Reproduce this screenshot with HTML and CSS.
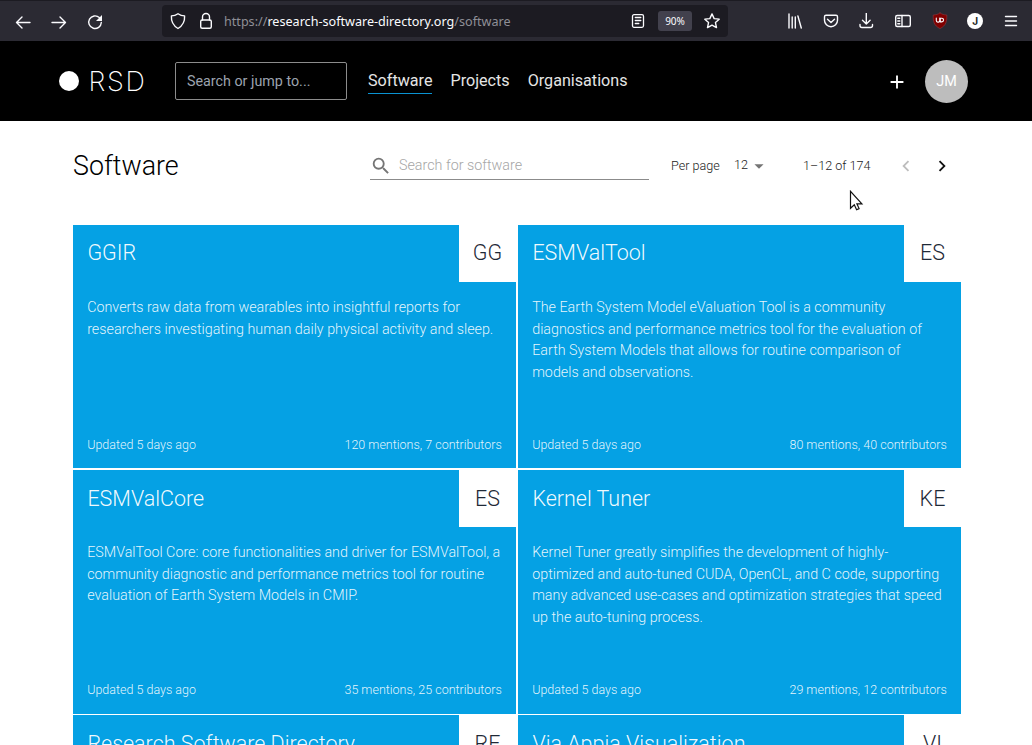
FILE: index.html
```html
<!DOCTYPE html>
<html lang="en">
<head>
<meta charset="utf-8">
<title>Software | Research Software Directory</title>
<link rel="stylesheet" href="styles.css">
</head>
<body>
<div class="toolbar">
  <div class="nav-buttons">
    <svg width="16" height="16" viewBox="0 0 16 16"><path d="M15 8.500H1.500M7 3 1.500 8.500 7 14"/></svg>
    <svg width="16" height="16" viewBox="0 0 16 16"><path d="M1 8.500h13.500M9 3l5.500 5.500L9 14"/></svg>
    <svg width="16" height="16" viewBox="0 0 16 16"><path d="M12.300 3.600A6.300 6.300 0 1 0 14.300 8.500"/><path class="solid" d="M15 1v6H9z"/></svg>
  </div>
  <div class="address">
    <svg width="16" height="18" viewBox="0 0 16 18"><path d="M8 1.700c2 1.400 4.300 2.100 6.600 2.200.3 4.800-1 9.300-6.600 12.600C2.400 13.200 1.100 8.700 1.400 3.900 3.700 3.800 6 3.100 8 1.700z"/></svg>
    <svg class="lock" width="14" height="18" viewBox="0 0 14 18"><rect x="1.700" y="8" width="10.600" height="8.300" rx="1.500"/><path d="M3.500 8V5a3.500 3.500 0 0 1 7 0v3"/></svg>
    <div class="url">https://<span>research-software-directory.org</span>/software</div>
    <svg class="reader" width="14" height="16" viewBox="0 0 14 16"><rect x="1.500" y="1.700" width="11" height="12.600" rx="1.500"/><path d="M4.300 4.500h5.500M4.300 7.500h5.500M4.300 10.500h3.500"/></svg>
    <div class="zoom">90%</div>
    <svg width="18" height="18" viewBox="0 0 18 18"><path d="m9 1.900 2.150 4.700 5.050.55-3.750 3.450 1.050 5L9 13.100 4.500 15.600l1.050-5L1.800 7.150l5.050-.55z"/></svg>
  </div>
  <div class="extensions">
    <svg width="16" height="16" viewBox="0 0 16 16"><path d="M2 1v14M5.200 4v11M8.300 4v11M10.900 3l3.400 12"/></svg>
    <svg width="16" height="16" viewBox="0 0 16 16"><path d="M3 2.200h10q1.500 0 1.500 1.500v3.500a6.500 6.500 0 0 1-13 0V3.700q0-1.500 1.500-1.500zM4.500 6.200 8 9.500l3.500-3.300"/></svg>
    <svg width="16" height="16" viewBox="0 0 16 16"><path d="M8.300 0v11M4.500 7.200l3.800 3.800 3.800-3.800M2 11.500v1q0 2 2 2h8.500q2 0 2-2v-1"/></svg>
    <svg width="18" height="16" viewBox="0 0 18 16"><rect x="1.700" y="2.500" width="14.600" height="11" rx="1.500"/><path d="M8 2.500v11M3.800 5.200h2M3.800 8h2M3.800 10.700h2"/></svg>
    <svg class="ublock" width="16" height="18" viewBox="0 0 16 18"><path class="ub-shield" d="M8 1c2 1.300 4 1.900 6.800 2 .2 6-.5 10.500-6.800 13.600C1.700 13.500 1 9 1.200 3 4 2.900 6 2.300 8 1z"/><path class="ub-mark" d="M4.300 6v2.500q0 1.600 1.400 1.600h.8q1.200 0 1.200-1.600V6M8.300 6.200v3.700h1.400a1.850 1.850 0 0 0 0-3.700z"/></svg>
    <div class="account">J</div>
    <svg width="16" height="16" viewBox="0 0 16 16"><path d="M2.500 3.500h11M2.500 8h11M2.500 12.500h11"/></svg>
  </div>
</div>
<header class="site-header">
  <div class="logo"><i></i><span>RSD</span></div>
  <div class="jump">Search or jump to...</div>
  <nav class="menu"><a class="active">Software</a><a>Projects</a><a>Organisations</a></nav>
  <svg class="plus" width="22" height="22" viewBox="0 0 24 24"><path d="M19 13h-6v6h-2v-6H5v-2h6V5h2v6h6z"/></svg>
  <div class="avatar">JM</div>
</header>
<main class="content">
  <div class="page-head">
    <h1>Software</h1>
    <div class="search"><svg width="22" height="22" viewBox="0 0 24 24"><path d="M15.500 14h-.79l-.28-.27A6.470 6.470 0 0 0 16 9.500 6.500 6.500 0 1 0 9.500 16c1.610 0 3.090-.59 4.230-1.570l.27.28v.79l5 4.990L20.490 19l-4.990-5zm-6 0C7.010 14 5 11.990 5 9.500S7.010 5 9.500 5 14 7.010 14 9.500 11.990 14 9.500 14z"/></svg><span>Search for software</span></div>
    <div class="pager">
      <span class="per-page">Per page</span>
      <span class="count">12</span>
      <svg class="caret" width="22" height="22" viewBox="0 0 24 24"><path d="m7 10 5 5 5-5z"/></svg>
      <span class="range">1–12 of 174</span>
      <svg class="prev" width="22" height="22" viewBox="0 0 24 24"><path d="M15.410 16.590 10.830 12l4.580-4.590L14 6l-6 6 6 6z"/></svg>
      <svg class="next" width="22" height="22" viewBox="0 0 24 24"><path d="M8.590 16.590 13.170 12 8.590 7.410 10 6l6 6-6 6z"/></svg>
    </div>
  </div>
  <section class="cards">
    <article class="card">
      <div class="card-top"><h2>GGIR</h2><b>GG</b></div>
      <p>Converts raw data from wearables into insightful reports for<br>researchers investigating human daily physical activity and sleep.</p>
      <footer><span>Updated 5 days ago</span><span>120 mentions, 7 contributors</span></footer>
    </article>
    <article class="card">
      <div class="card-top"><h2>ESMValTool</h2><b>ES</b></div>
      <p>The Earth System Model eValuation Tool is a community<br>diagnostics and performance metrics tool for the evaluation of<br>Earth System Models that allows for routine comparison of<br>models and observations.</p>
      <footer><span>Updated 5 days ago</span><span>80 mentions, 40 contributors</span></footer>
    </article>
    <article class="card">
      <div class="card-top"><h2>ESMValCore</h2><b>ES</b></div>
      <p>ESMValTool Core: core functionalities and driver for ESMValTool, a<br>community diagnostic and performance metrics tool for routine<br>evaluation of Earth System Models in CMIP.</p>
      <footer><span>Updated 5 days ago</span><span>35 mentions, 25 contributors</span></footer>
    </article>
    <article class="card">
      <div class="card-top"><h2>Kernel Tuner</h2><b>KE</b></div>
      <p>Kernel Tuner greatly simplifies the development of highly-<br>optimized and auto-tuned CUDA, OpenCL, and C code, supporting<br>many advanced use-cases and optimization strategies that speed<br>up the auto-tuning process.</p>
      <footer><span>Updated 5 days ago</span><span>29 mentions, 12 contributors</span></footer>
    </article>
    <article class="card">
      <div class="card-top"><h2>Research Software Directory</h2><b>RE</b></div>
    </article>
    <article class="card">
      <div class="card-top"><h2>Via Appia Visualization</h2><b>VI</b></div>
    </article>
  </section>
</main>
<svg class="cursor" width="16" height="22" viewBox="0 0 16 22"><path d="M1.500 1.300v17l3.800-3.500 2.300 5 2.500-1.200-2.200-4.800h5z"/></svg>
</body>
</html>
```
FILE: styles.css
```css
* { box-sizing: border-box; }
body {
  margin: 0;
  width: 1032px;
  height: 745px;
  overflow: hidden;
  position: relative;
  background: #fff;
  font-family: Roboto, "Liberation Sans", sans-serif;
}
svg { display: block; flex: none; }

/* Browser toolbar */
.toolbar {
  display: flex;
  align-items: center;
  height: 41px;
  padding: 0 13px 0 15px;
  background: #2b2a33;
  border-top: 1px solid #1c1b22;
}
.toolbar svg { fill: none; stroke: #fbfbfe; stroke-width: 1.4; stroke-linejoin: round; stroke-linecap: round; }
.toolbar .solid { fill: #fbfbfe; stroke: none; }
.nav-buttons { display: flex; gap: 20px; width: 147px; padding-top: 1px; }
.address {
  display: flex;
  align-items: center;
  width: 566px;
  height: 32px;
  padding: 0 7px 0 8px;
  border-radius: 4px;
  background: #1c1b22;
}
.lock { margin-left: 13px; }
.url { flex: 1; margin-left: 11px; padding-top: 2px; color: #8f8f96; font: 12.6px/20px "Noto Sans", sans-serif; }
.url span { color: #fbfbfe; }
.toolbar .reader { stroke-width: 1.3; }
.zoom {
  width: 34px;
  height: 20px;
  margin: 0 11px 0 13px;
  border-radius: 3px;
  background: #42414d;
  color: #fbfbfe;
  font: 10px/20px "Noto Sans", sans-serif;
  text-align: center;
}
.extensions { display: flex; align-items: center; justify-content: space-between; flex: 1; margin-left: 59px; }
.toolbar .ub-shield { fill: #800000; stroke: #8d3940; stroke-width: .6; }
.toolbar .ub-mark { stroke-width: 1.1; }
.account {
  width: 16px;
  height: 16px;
  border-radius: 50%;
  background: #fff;
  color: #222;
  font: bold 10px/16px Inter, sans-serif;
  text-align: center;
}

/* Site header */
.site-header { display: flex; align-items: center; height: 80px; padding: 0 64px 0 58.500px; background: #000; color: #fff; }
.logo { display: flex; align-items: center; gap: 10px; width: 116.500px; }
.logo i { width: 20px; height: 20px; border-radius: 50%; background: #fff; }
.logo span { padding-top: 2px; font: 200 27px/30px Inter, sans-serif; letter-spacing: 1.7px; }
.jump {
  width: 172px;
  height: 38px;
  padding-left: 11px;
  border: 1px solid #8c8c8c;
  border-radius: 2px;
  color: #9ca3af;
  font-size: 14.3px;
  line-height: 37px;
}
.menu { display: flex; gap: 18px; flex: 1; margin-left: 21px; font-size: 16.150px; line-height: 26px; color: #e5e5e5; }
.menu a { height: 26px; }
.menu .active { border-bottom: 1px solid #0a93d2; }
.plus { fill: #fff; margin: 1px 17.500px 0 0; }
.avatar {
  width: 43px;
  height: 43px;
  border-radius: 50%;
  background: #bdbdbd;
  font-size: 14.4px;
  line-height: 43px;
  text-align: center;
}

/* Page heading */
.content { width: 888px; margin-left: 73px; }
.page-head { display: flex; align-items: center; height: 104px; padding-bottom: 15px; }
h1, h2, p { margin: 0; font-weight: 300; }
h1 { width: 297px; font-size: 26.800px; line-height: 36px; }
.search {
  display: flex;
  align-items: center;
  gap: 7px;
  width: 279px;
  height: 30px;
  margin-bottom: 1px;
  border-bottom: 1px solid #8b8b8b;
  color: #a6a6a6;
  font-size: 14.300px;
  font-weight: 300;
}
.search svg { fill: #757575; margin-top: 2px; }
.pager { display: flex; align-items: center; flex: 1; margin-left: 22px; color: #222; font-size: 12.600px; font-weight: 300; }
.per-page { width: 63px; }
.count { width: 14px; padding-bottom: 2px; }
.caret { fill: #757575; margin-right: 33px; }
.range { width: 92px; }
.prev { fill: #bdbdbd; margin-right: 14px; }
.next { fill: #111; }

/* Cards */
.cards { display: grid; grid-template-columns: 443px 443px; grid-auto-rows: 243.400px; gap: 1.800px 2px; }
.card { display: flex; flex-direction: column; background: #05a1e4; color: #fff; }
.card-top { display: flex; height: 57px; justify-content: space-between; }
h2 { padding: 14.400px 0 0 14.400px; font-size: 21.480px; line-height: 27px; color: rgba(255, 255, 255, .95); }
.card b { width: 57px; padding-top: .4px; background: #fff; color: #1f2937; font-size: 21.480px; font-weight: 300; line-height: 56px; text-align: center; }
.card p { flex: 1; padding: 15.100px 14.200px 0; font-size: 14.300px; line-height: 21.600px; white-space: nowrap; color: rgba(255, 255, 255, .9); }
.card footer { display: flex; justify-content: space-between; padding: 0 14.200px 14.300px; font-size: 12.500px; font-weight: 300; line-height: 18px; color: rgba(255, 255, 255, .9); }

.cursor { position: absolute; left: 849px; top: 190px; fill: #fff; stroke: #111; stroke-width: 1.200; }
```
